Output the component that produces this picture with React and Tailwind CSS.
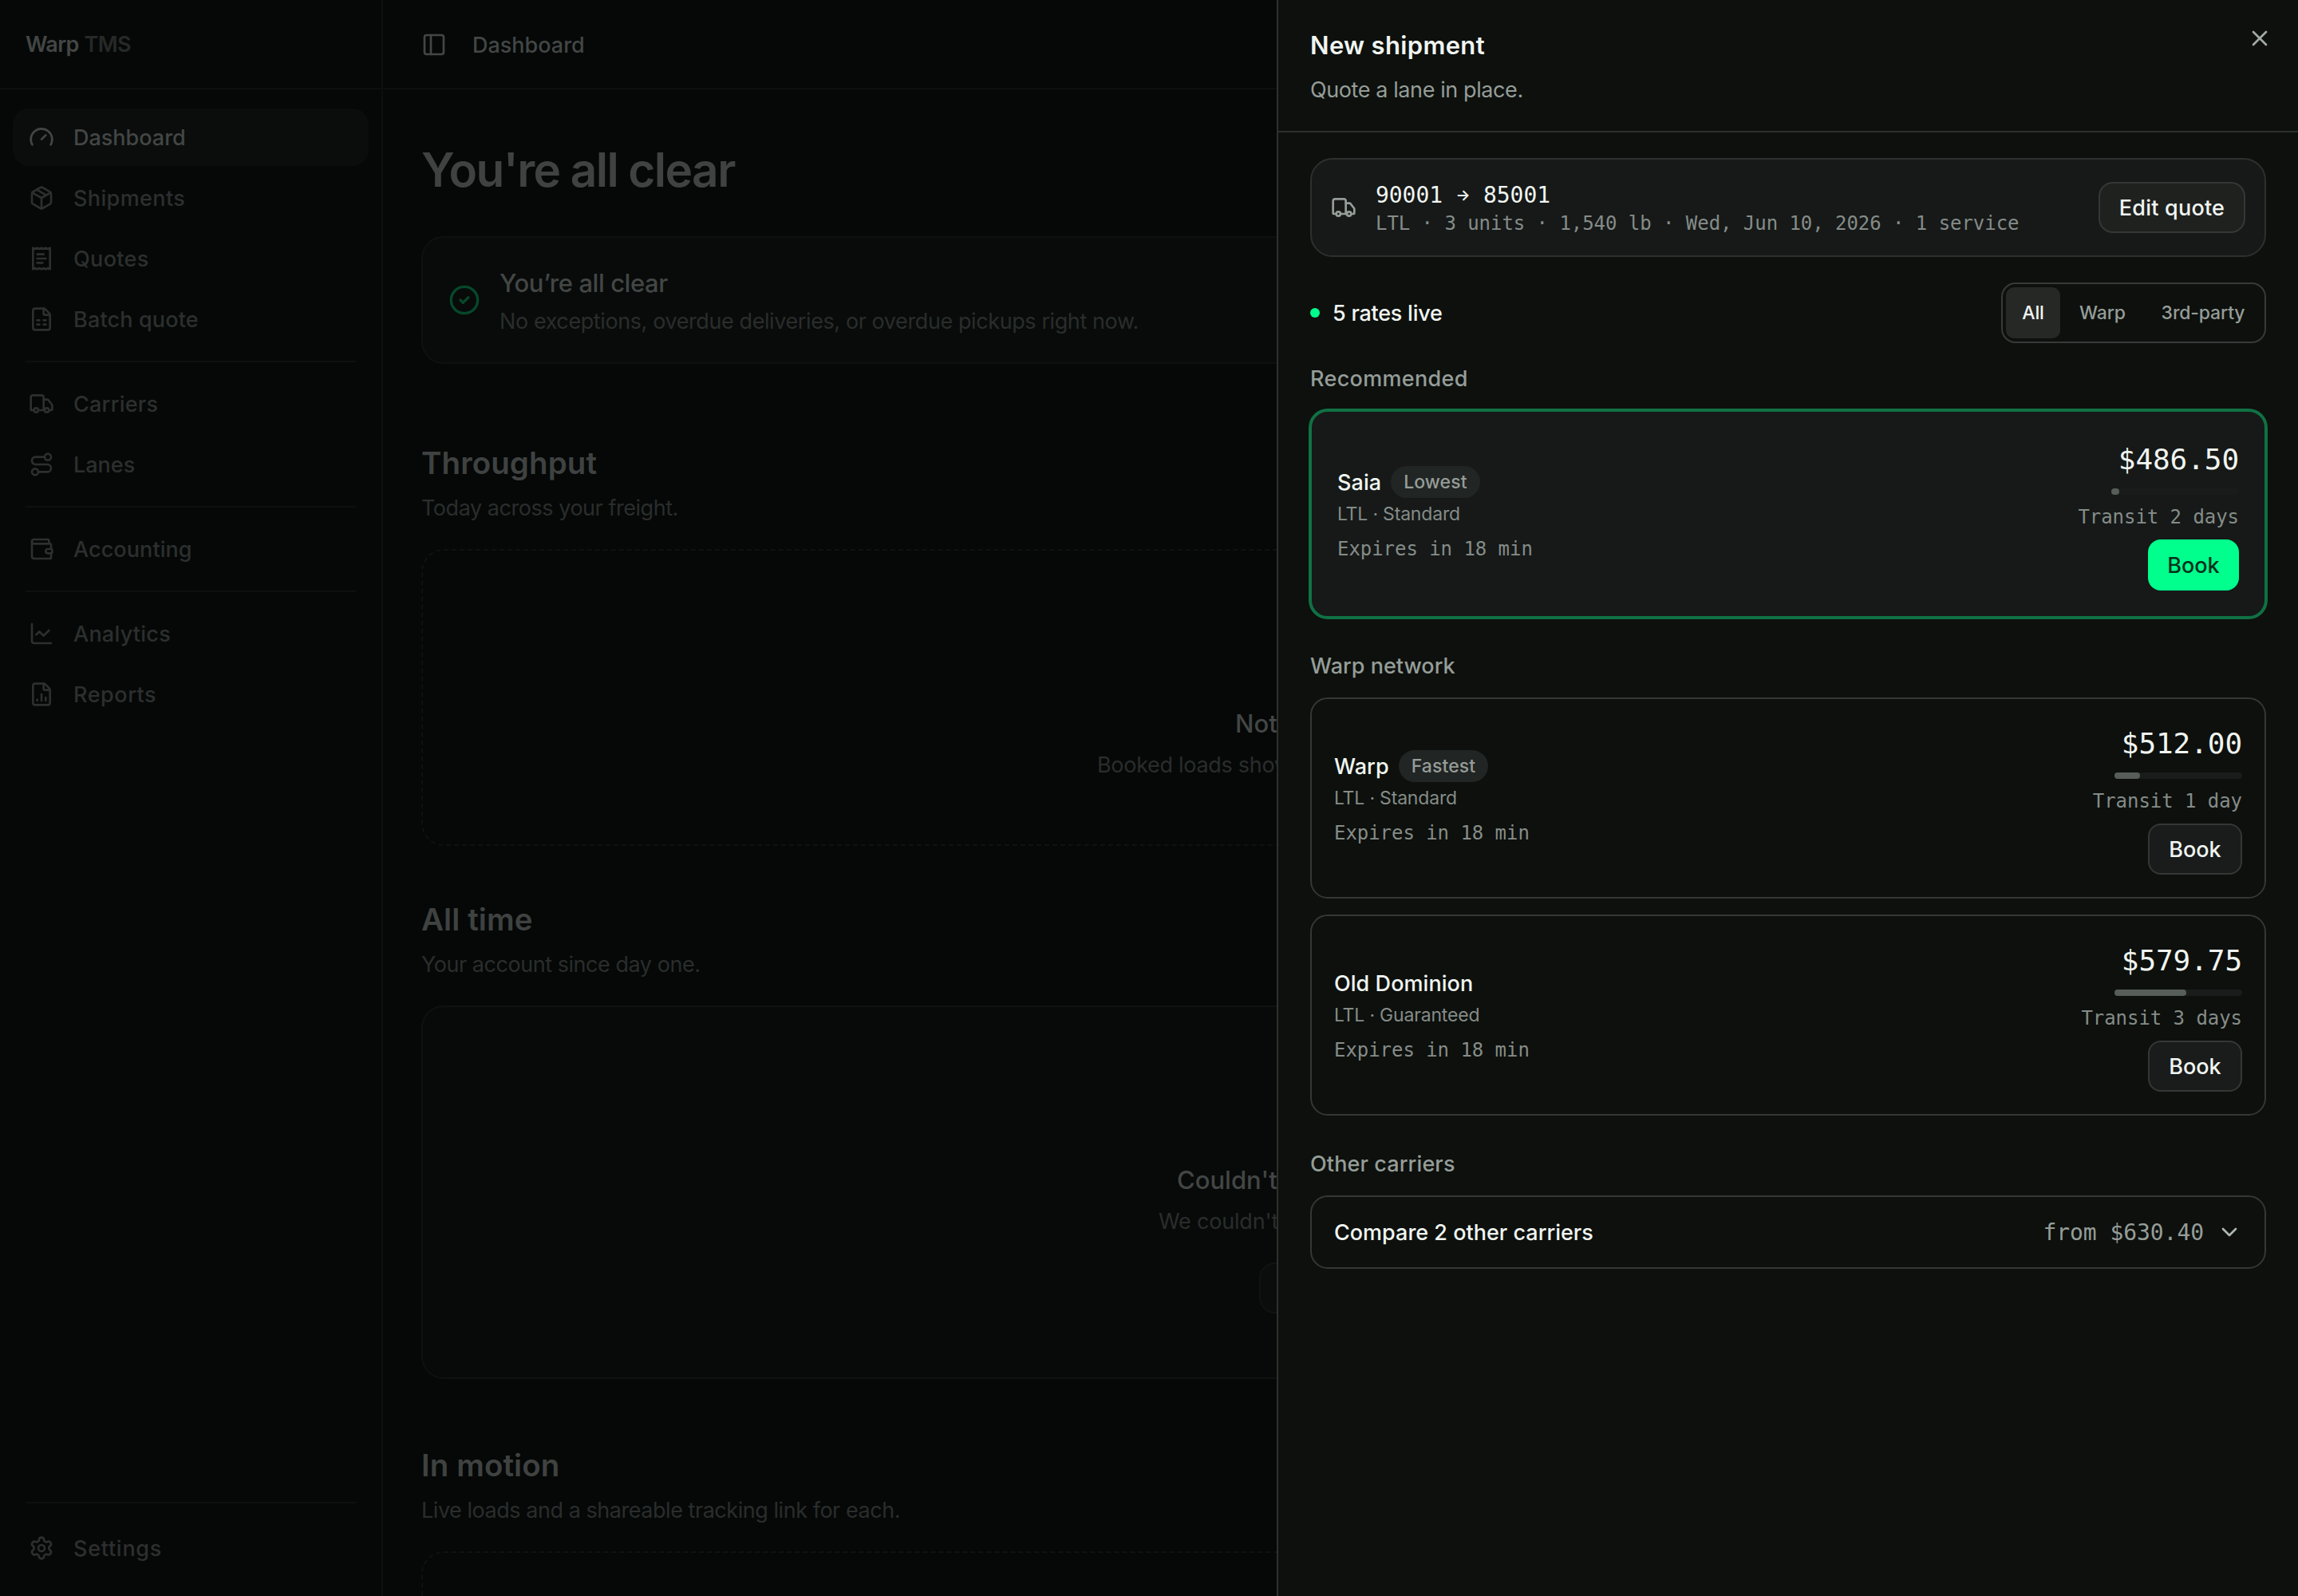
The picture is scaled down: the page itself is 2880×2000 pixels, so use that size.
import {
  ChartLine,
  ChevronDown,
  CircleCheck,
  FileChartColumn,
  FileSpreadsheet,
  Gauge,
  Package,
  PanelLeft,
  Route,
  Settings,
  Truck,
  Wallet,
  X,
} from "lucide-react";
import clsx from "clsx";

const mono = "font-['DejaVu_Sans_Mono',monospace] tracking-[-0.002em]";

const ReceiptIcon = (props) => (
  <svg viewBox="0 0 24 24" fill="none" stroke="currentColor" strokeWidth={2} strokeLinecap="round" strokeLinejoin="round" {...props}>
    <path d="M4 2v20l2-1 2 1 2-1 2 1 2-1 2 1 2-1 2 1V2l-2 1-2-1-2 1-2-1-2 1-2-1-2 1Z" />
    <path d="M14 8H8" />
    <path d="M16 12H8" />
    <path d="M13 16H8" />
  </svg>
);

const navGroups = [
  [
    { label: "Dashboard", icon: Gauge, active: true },
    { label: "Shipments", icon: Package, spacing: "tracking-[0.014em]" },
    { label: "Quotes", icon: ReceiptIcon, spacing: "tracking-[0.012em]" },
    { label: "Batch quote", icon: FileSpreadsheet, spacing: "tracking-[0.006em]" },
  ],
  [
    { label: "Carriers", icon: Truck, spacing: "tracking-[0.009em]" },
    { label: "Lanes", icon: Route },
  ],
  [{ label: "Accounting", icon: Wallet, spacing: "tracking-[0.003em]" }],
  [
    { label: "Analytics", icon: ChartLine, spacing: "tracking-[0.009em]" },
    { label: "Reports", icon: FileChartColumn, spacing: "tracking-[0.02em]" },
  ],
];

const networkRates = [
  { carrier: "Warp", badge: "Fastest", service: "LTL · Standard", price: "$512.00", transit: "Transit 1 day", fill: 32 },
  { carrier: "Old Dominion", service: "LTL · Guaranteed", price: "$579.75", transit: "Transit 3 days", fill: 90 },
];

function NavItem({ label, icon: Icon, active, spacing }) {
  return (
    <div
      className={clsx(
        "flex h-[72px] items-center gap-6 rounded-[20px] pl-5 text-[27px] font-medium",
        active ? "bg-[#0a0d0c] text-[#434645]" : "text-[#2c2f2e]",
        spacing,
      )}
    >
      <Icon className="size-8" />
      <span className="pt-0.5">{label}</span>
    </div>
  );
}

function Sidebar() {
  return (
    <aside className="flex w-[480px] shrink-0 flex-col border-r-2 border-[#0c0f0d]">
      <div className="flex h-28 shrink-0 items-center border-b-2 border-[#0c0f0d] pt-[3px] pl-8 text-[27px] font-semibold tracking-[-0.026em] text-[#434645]">
        Warp<span className="ml-[7px] text-[#262928]">TMS</span>
      </div>
      <nav className="flex flex-col px-4 pt-6">
        {navGroups.map((group, i) => (
          <div key={group[0].label}>
            {i > 0 && <div className="mx-4 my-4 h-0.5 bg-[#0d100e]" />}
            <div className="flex flex-col gap-1">
              {group.map((item) => (
                <NavItem key={item.label} {...item} />
              ))}
            </div>
          </div>
        ))}
      </nav>
      <div className="mt-auto px-4 pb-6">
        <div className="mx-4 mb-5 h-0.5 bg-[#0d100e]" />
        <NavItem label="Settings" icon={Settings} spacing="tracking-[0.027em]" />
      </div>
    </aside>
  );
}

function SectionHeading({ title, sub, className }) {
  return (
    <div className={className}>
      <h2 className="text-[38.5px] leading-[56px] font-semibold tracking-[0.002em] text-[#3f4241]">{title}</h2>
      <p className="mt-[9px] -mb-px text-[27px] leading-10 tracking-[-0.017em] text-[#2a2d2c]">{sub}</p>
    </div>
  );
}

function Dashboard() {
  return (
    <main className="flex min-w-0 flex-1 flex-col">
      <header className="flex h-28 shrink-0 items-center border-b-2 border-[#0c0f0d] pt-0.5 pl-12 text-[27px] font-medium text-[#434645]">
        <PanelLeft className="size-8" />
        <span className="ml-8 pt-0.5">Dashboard</span>
      </header>

      <div className="flex flex-col px-12 pt-[65px]">
        <h1 className="h-[72px] text-[58.5px] leading-[72px] font-semibold tracking-[-0.027em] text-[#3f4241]">
          You're all clear
        </h1>

        <div className="mt-[47px] flex h-40 shrink-0 items-center gap-6 rounded-[28px] border-2 border-[#0e1110] bg-[#080b0a] pl-8">
          <CircleCheck className="size-10 text-[#07472b]" />
          <div className="pt-[5px]">
            <div className="text-[31px] leading-[48px] font-medium tracking-[-0.014em] text-[#434645]">You’re all clear</div>
            <div className="text-[27px] leading-[48px] tracking-[-0.015em] text-[#2a2d2c]">
              No exceptions, overdue deliveries, or overdue pickups right now.
            </div>
          </div>
        </div>

        <SectionHeading className="mt-24" title="Throughput" sub="Today across your freight." />
        <div className="mt-8 flex h-[372px] shrink-0 flex-col items-center justify-end rounded-[28px] border-2 border-dashed border-[#0f1211] pb-[79px]">
          <div className="w-[264px] text-[31px] leading-[48px] font-medium text-[#434645]">Not</div>
          <div className="mt-2 w-[610px] text-[27px] leading-10 tracking-[-0.011em] text-[#2a2d2c]">Booked loads show</div>
        </div>

        <SectionHeading className="mt-16" title="All time" sub="Your account since day one." />
        <div className="mt-8 flex h-[468px] shrink-0 flex-col items-center justify-end rounded-[28px] border-2 border-[#0e1110] bg-[#070a09] pb-20">
          <div className="w-[410px] text-[31px] leading-[48px] font-medium text-[#434645]">Couldn't</div>
          <div className="mt-2 w-[456px] text-[27px] leading-10 tracking-[-0.007em] text-[#2a2d2c]">We couldn't</div>
          <div className="mt-[31px] h-16 w-[204px] rounded-[20px] border-2 border-[#101312] bg-[#0a0d0c]" />
        </div>

        <SectionHeading className="mt-20" title="In motion" sub="Live loads and a shareable tracking link for each." />
        <div className="mt-8 h-[300px] shrink-0 rounded-[28px] border-2 border-dashed border-[#0f1211]" />
      </div>
    </main>
  );
}

function RateCard({ carrier, badge, service, price, transit, fill, recommended }) {
  return (
    <div
      className={clsx(
        "flex items-center justify-between rounded-[22px] border-2",
        recommended ? "border-[#107144] bg-[#161918] p-8 ring-2 ring-[#107144]" : "border-[#343735] p-7",
      )}
    >
      <div>
        <div className="flex h-10 items-center gap-3 text-[27px] font-medium tracking-[0.002em] text-[#f0f5f1]">
          <span className="pt-0.5">{carrier}</span>
          {badge && (
            <span className="flex h-10 items-center rounded-full bg-[#212524] px-4 text-[23px] tracking-[0.004em] text-[#959d98]">
              {badge}
            </span>
          )}
        </div>
        <div className="mt-1 text-[23px] leading-8 tracking-[-0.008em] text-[#858c88]">{service}</div>
        <div className={clsx(mono, "mt-3 text-2xl leading-8 text-[#858c88]")}>Expires in 18 min</div>
      </div>
      <div className="flex flex-col items-end">
        <div className={clsx(mono, "text-4xl leading-[56px] text-[#f0f5f1]")}>{price}</div>
        <div className="mt-2 h-2 w-40 rounded-full bg-[#1a1c1b]">
          <div className="h-2 rounded-full bg-[#575d59]" style={{ width: fill }} />
        </div>
        <div className={clsx(mono, "mt-2 text-2xl leading-10 text-[#858c88]")}>{transit}</div>
        <button
          className={clsx(
            "mt-2 h-16 rounded-[16px] pt-0.5 text-[27px] font-medium",
            recommended ? "w-[114px] bg-[#00ff8c] text-[#04301c]" : "w-[118px] border-2 border-[#343735] bg-[#1a1c1b] text-[#f0f5f1]",
          )}
        >
          Book
        </button>
      </div>
    </div>
  );
}

function GroupLabel({ children, className }) {
  return <div className={clsx("mb-[19px] pt-px text-[27px] leading-10 font-medium text-[#959d98]", className)}>{children}</div>;
}

function ShipmentDrawer() {
  return (
    <section className="fixed inset-y-0 right-0 flex w-[1280px] flex-col border-l-2 border-[#2c302e] bg-[#0d100d]">
      <header className="flex h-[166px] shrink-0 items-start justify-between border-b-2 border-[#2c302e] pt-8 pr-8 pl-10">
        <div className="pt-px">
          <h2 className="text-[31px] leading-[48px] font-semibold tracking-[0.011em] text-[#f0f5f1]">New shipment</h2>
          <p className="mt-3 text-[27px] leading-10 tracking-[-0.015em] text-[#959d98]">Quote a lane in place.</p>
        </div>
        <X className="size-8 text-[#a3aaa6]" />
      </header>

      <div className="flex flex-col px-10 pt-8">
        <div className="flex h-[124px] items-center rounded-[28px] border-2 border-[#2c302e] bg-[#161918] px-6">
          <Truck className="size-8 text-[#959d98]" />
          <div className="ml-6">
            <div className={clsx(mono, "flex pt-px text-[28px] leading-10 text-[#f0f5f1]")}>
              90001
              <span className="mx-[17px] flex w-[17px] justify-center font-['Inter',sans-serif] text-[19px] font-semibold">→</span>
              85001
            </div>
            <div className={clsx(mono, "-mt-px text-2xl leading-8 text-[#858c88]")}>
              LTL · 3 units · 1,540 lb · Wed, Jun 10, 2026 · 1 service
            </div>
          </div>
          <button className="ml-auto h-16 w-[184px] rounded-[18px] border-2 border-[#343735] bg-[#1f211f] pt-0.5 text-[27px] font-medium tracking-[0.008em] text-[#f0f5f1]">
            Edit quote
          </button>
        </div>

        <div className="mt-8 flex items-center justify-between">
          <div className="flex items-center gap-4 text-[27px] font-medium tracking-[-0.009em] text-[#f0f5f1]">
            <span className="size-3 rounded-full bg-[#00ff8c]" />
            <span className="pt-0.5">5 rates live</span>
          </div>
          <div className="flex h-[76px] w-[332px] justify-between rounded-[18px] border-2 border-[#373a38] p-1 text-[23px] font-medium tracking-[-0.006em] text-[#959d98]">
            <span className="flex w-[68px] items-center justify-center rounded-[10px] bg-[#262826] text-[#f0f5f1]">All</span>
            <span className="flex w-[98px] items-center justify-center">Warp</span>
            <span className="flex w-[146px] items-center justify-center">3rd-party</span>
          </div>
        </div>

        <GroupLabel className="mt-6 tracking-[0.012em]">Recommended</GroupLabel>
        <RateCard
          recommended
          carrier="Saia"
          badge="Lowest"
          service="LTL · Standard"
          price="$486.50"
          transit="Transit 2 days"
          fill={10}
        />

        <GroupLabel className="mt-10">Warp network</GroupLabel>
        <div className="flex flex-col gap-5">
          {networkRates.map((rate) => (
            <RateCard key={rate.carrier} {...rate} />
          ))}
        </div>

        <GroupLabel className="mt-10 tracking-[0.004em]">Other carriers</GroupLabel>
        <div className="flex h-[92px] items-center rounded-[22px] border-2 border-[#343735] px-7">
          <span className="pt-0.5 text-[27px] font-medium text-[#f0f5f1]">Compare 2 other carriers</span>
          <span className={clsx(mono, "ml-auto pt-px text-[28px] text-[#959d98]")}>from $630.40</span>
          <ChevronDown className="ml-4 size-8 text-[#b0b7b2]" />
        </div>
      </div>
    </section>
  );
}

export default function App() {
  return (
    <div className="flex h-[2000px] w-[2880px] overflow-hidden bg-[#050807] font-['Inter',sans-serif]">
      <Sidebar />
      <Dashboard />
      <ShipmentDrawer />
    </div>
  );
}
